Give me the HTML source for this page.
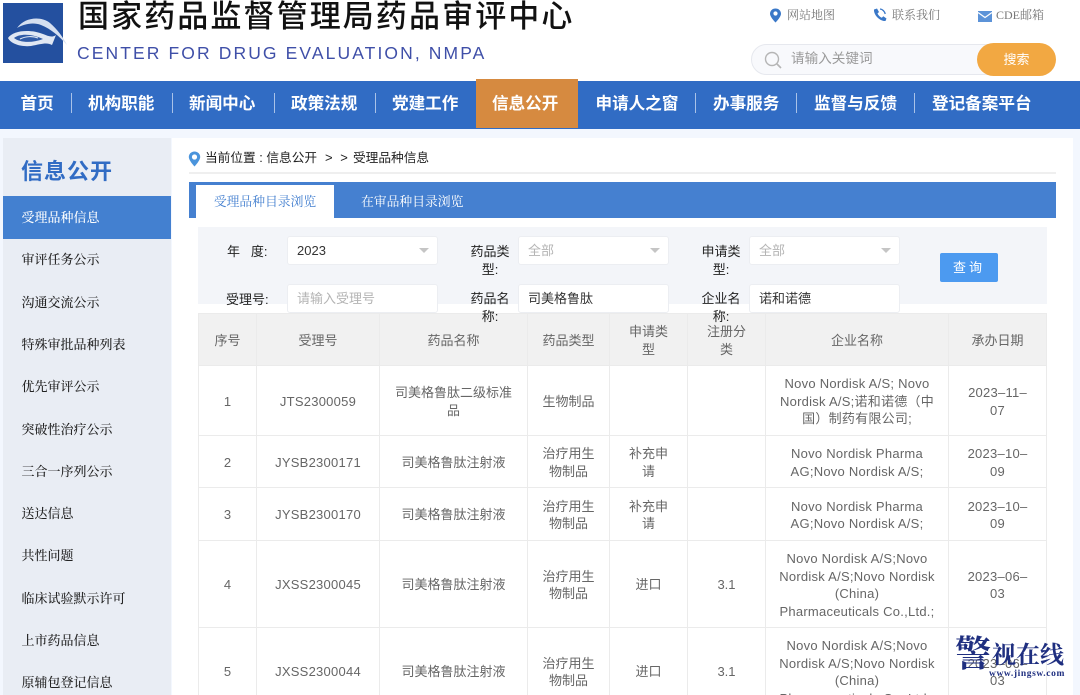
<!DOCTYPE html>
<html lang="zh-CN">
<head>
<meta charset="utf-8">
<title>受理品种信息</title>
<style>
*{box-sizing:border-box;margin:0;padding:0}
html,body{width:1080px;height:695px;overflow:hidden;background:#f3f7fe}
body{position:relative;font-family:"Liberation Sans","Noto Sans CJK SC",sans-serif;color:#333}
.a{position:absolute;white-space:nowrap}
.serif{font-family:"Liberation Serif","Noto Serif CJK SC",serif}
.nav{position:absolute;left:0;top:81px;width:1080px;height:48px;background:#316cc4}
.nav span{position:absolute;top:0;line-height:46px;color:#fff;font-size:16.6px;font-weight:700;white-space:nowrap}
.nav i{position:absolute;top:12px;width:1px;height:20px;background:#a9c2e8}
.side{position:absolute;left:3px;top:138px;width:168px;height:557px;background:#e9edf4}
.side div{position:absolute;left:18.5px;font-size:13px;line-height:20px;color:#222;white-space:nowrap;font-family:"Liberation Serif","Noto Serif CJK SC",serif;font-weight:500}
.box{position:absolute;background:#fff;border:1px solid #eceef2;border-radius:3px;height:29px;width:151px;font-size:13px;line-height:28px;padding-left:9px;color:#333}
.ph{color:#b4b4b4}
.lab{position:absolute;font-size:13px;line-height:17.5px;color:#222;text-align:center;width:40px}
.tri{position:absolute;width:0;height:0;border-left:5px solid transparent;border-right:5px solid transparent;border-top:5px solid #c5c5c5}
table{position:absolute;left:198px;top:313px;width:848px;border-collapse:collapse;table-layout:fixed;font-size:13px;line-height:17.5px;color:#666;text-align:center}
td,th{border:1px solid #ebebeb;font-weight:400;padding:2px 13px 0;vertical-align:middle;word-break:break-all}
th{background:#f1f1f1;height:52px}
.l{letter-spacing:.25px;padding-left:0;padding-right:0;word-break:normal}
</style>
</head>
<body>
<div class="a" style="left:0;top:0;width:1080px;height:81px;background:#fff"></div>
<svg class="a" style="left:3px;top:3px" width="66" height="62" viewBox="0 0 66 62">
<rect width="60" height="60" fill="#24509f"/>
<path d="M14 25C22 14 38 13 47 20C54 26 60 34 64 42C56 33 48 26 38 22C30 19 21 21 14 25Z" fill="#d5dff0"/>
<path d="M5 35C10 27 28 26 40 31C45 33 49 35 53 32L49 42C44 39 38 41 28 43C18 44 8 41 5 35Z" fill="#e0e7f3"/>
<path d="M11 35C17 30 30 31 40 36C30 40 17 40 11 35Z" fill="#2f5aa6"/>
<path d="M17 36C23 33 30 33 35 35" fill="none" stroke="#dfe7f3" stroke-width="1.1"/>
</svg>
<div class="a" style="left:78px;top:-4px;font-size:31px;line-height:42px;letter-spacing:2.1px;color:#111;font-weight:500">国家药品监督管理局药品审评中心</div>
<div class="a" style="left:77px;top:43px;font-size:17.5px;line-height:21px;letter-spacing:2.1px;color:#3f4fa8">CENTER FOR DRUG EVALUATION, NMPA</div>

<svg class="a" style="left:769px;top:8px" width="13" height="15" viewBox="0 0 13 15"><path d="M6.5 .5C3.2 .5 1 3 1 5.7C1 9 6.5 14.500 6.500 14.500S12 9 12 5.700C12 3 9.800 .5 6.500 .5Z" fill="#3a78c8"/><circle cx="6.500" cy="5.500" r="2.100" fill="#fff"/></svg>
<div class="a serif" style="left:787px;top:6px;font-size:12px;line-height:18px;color:#777">网站地图</div>
<svg class="a" style="left:872px;top:7px" width="16" height="16" viewBox="0 0 16 16"><path d="M2 2.500L5 1.500L7 5L5.500 6.500C6.500 8.500 7.800 9.800 9.800 10.800L11.300 9.300L14.500 11.500L13.500 14C8 14.500 1.500 8 2 2.500Z" fill="#3a78c8"/><path d="M8 2C10.500 2.200 12.800 4.500 13.200 7" fill="none" stroke="#3a78c8" stroke-width="1.300"/></svg>
<div class="a serif" style="left:892px;top:6px;font-size:12px;line-height:18px;color:#777">联系我们</div>
<svg class="a" style="left:978px;top:11px" width="14" height="11" viewBox="0 0 14 11"><rect width="14" height="11" fill="#5c93d8"/><path d="M0 1.500L7 6.500L14 1.500" fill="none" stroke="#fff" stroke-width="1.200"/></svg>
<div class="a serif" style="left:996px;top:6px;font-size:12px;line-height:18px;color:#777">CDE邮箱</div>

<div class="a" style="left:751px;top:44px;width:300px;height:31px;background:#f8f9fc;border:1px solid #e6e8ee;border-radius:16px"></div>
<svg class="a" style="left:763px;top:50px" width="20" height="20" viewBox="0 0 20 20"><circle cx="9" cy="9" r="6.500" fill="none" stroke="#b5b5b5" stroke-width="1.400"/><path d="M14 14L18 18" stroke="#b5b5b5" stroke-width="1.600"/></svg>
<div class="a" style="left:791px;top:49px;font-size:13.600px;line-height:20px;color:#9a9a9a">请输入关键词</div>
<div class="a" style="left:977px;top:43px;width:79px;height:33px;background:#f2a842;border-radius:17px;color:#fff;font-size:13px;line-height:33px;text-align:center">搜索</div>

<div class="nav">
<span style="left:20.500px">首页</span><i style="left:71px"></i>
<span style="left:88px">机构职能</span><i style="left:172px"></i>
<span style="left:189px">新闻中心</span><i style="left:274px"></i>
<span style="left:291px">政策法规</span><i style="left:375px"></i>
<span style="left:392px">党建工作</span>
<div style="position:absolute;left:476px;top:-2px;width:102px;height:49px;background:#d68a40"></div>
<span style="left:492px">信息公开</span>
<span style="left:595.500px">申请人之窗</span><i style="left:695px"></i>
<span style="left:713px">办事服务</span><i style="left:796px"></i>
<span style="left:814px">监督与反馈</span><i style="left:914px"></i>
<span style="left:932px">登记备案平台</span>
</div>

<div class="a" style="left:172px;top:138px;width:901px;height:557px;background:#fff"></div>

<div class="side">
<div style="left:18px;top:19px;font-family:'Liberation Sans','Noto Sans CJK SC',sans-serif;font-size:22px;line-height:30px;font-weight:700;color:#316cc4;letter-spacing:1px">信息公开</div>
<div style="left:0;top:58px;width:168px;height:43px;background:#4380d0"></div>
<div style="top:70px;color:#fff">受理品种信息</div>
<div style="top:112px">审评任务公示</div>
<div style="top:155px">沟通交流公示</div>
<div style="top:197px">特殊审批品种列表</div>
<div style="top:239px">优先审评公示</div>
<div style="top:282px">突破性治疗公示</div>
<div style="top:324px">三合一序列公示</div>
<div style="top:366px">送达信息</div>
<div style="top:408px">共性问题</div>
<div style="top:451px">临床试验默示许可</div>
<div style="top:493px">上市药品信息</div>
<div style="top:535px">原辅包登记信息</div>
</div>

<svg class="a" style="left:188px;top:151px" width="13" height="16" viewBox="0 0 13 16"><path d="M6.500 .5C3.200 .5 .8 3 .8 6C.8 9.500 6.500 15.500 6.500 15.500S12.200 9.500 12.200 6C12.200 3 9.800 .5 6.500 .5Z" fill="#4a94dc"/><circle cx="6.500" cy="6" r="2.600" fill="#fff"/></svg>
<div class="a" style="left:205px;top:148px;font-size:12.700px;line-height:20px;color:#222">当前位置 : 信息公开</div>
<div class="a" style="left:325px;top:148px;font-size:13px;line-height:20px;color:#222;letter-spacing:2px">&gt; &gt;</div>
<div class="a" style="left:353px;top:148px;font-size:12.700px;line-height:20px;color:#222">受理品种信息</div>
<div class="a" style="left:189px;top:172px;width:867px;height:2px;background:#efefef"></div>

<div class="a" style="left:189px;top:182px;width:867px;height:36px;background:#4580d0"></div>
<div class="a serif" style="left:196px;top:185px;width:138px;height:33px;background:#fff;color:#4580d0;font-size:12.800px;line-height:35px;text-align:center">受理品种目录浏览</div>
<div class="a serif" style="left:361px;top:185px;color:#fff;font-size:12.800px;line-height:35px">在审品种目录浏览</div>

<div class="a" style="left:198px;top:227px;width:849px;height:77px;background:#f3f5f9"></div>

<table>
<colgroup><col style="width:58px"><col style="width:123px"><col style="width:148px"><col style="width:82px"><col style="width:78px"><col style="width:78px"><col style="width:183px"><col style="width:98px"></colgroup>
<tr><th>序号</th><th>受理号</th><th>药品名称</th><th>药品类型</th><th>申请类型</th><th>注册分类</th><th>企业名称</th><th>承办日期</th></tr>
<tr style="height:70px"><td>1</td><td class="l">JTS2300059</td><td>司美格鲁肽二级标准品</td><td>生物制品</td><td></td><td></td><td class="l">Novo Nordisk A/S; Novo<br>Nordisk A/S;诺和诺德（中<br>国）制药有限公司;</td><td class="l">2023–11–<br>07</td></tr>
<tr style="height:52px"><td>2</td><td class="l">JYSB2300171</td><td>司美格鲁肽注射液</td><td>治疗用生物制品</td><td>补充申请</td><td></td><td class="l">Novo Nordisk Pharma<br>AG;Novo Nordisk A/S;</td><td class="l">2023–10–<br>09</td></tr>
<tr style="height:53px"><td>3</td><td class="l">JYSB2300170</td><td>司美格鲁肽注射液</td><td>治疗用生物制品</td><td>补充申请</td><td></td><td class="l">Novo Nordisk Pharma<br>AG;Novo Nordisk A/S;</td><td class="l">2023–10–<br>09</td></tr>
<tr style="height:87px"><td>4</td><td class="l">JXSS2300045</td><td>司美格鲁肽注射液</td><td>治疗用生物制品</td><td>进口</td><td>3.1</td><td class="l">Novo Nordisk A/S;Novo<br>Nordisk A/S;Novo Nordisk<br>(China)<br>Pharmaceuticals Co.,Ltd.;</td><td class="l">2023–06–<br>03</td></tr>
<tr style="height:87px"><td>5</td><td class="l">JXSS2300044</td><td>司美格鲁肽注射液</td><td>治疗用生物制品</td><td>进口</td><td>3.1</td><td class="l">Novo Nordisk A/S;Novo<br>Nordisk A/S;Novo Nordisk<br>(China)<br>Pharmaceuticals Co.,Ltd.;</td><td class="l">2023–06–<br>03</td></tr>
</table>

<div class="a" style="left:227px;top:243px;font-size:13px;line-height:17.500px;color:#222">年 &nbsp; 度:</div>
<div class="box" style="left:287px;top:236px">2023</div><div class="tri" style="left:419px;top:248px"></div>
<div class="lab" style="left:470px;top:243px">药品类型:</div>
<div class="box ph" style="left:518px;top:236px">全部</div><div class="tri" style="left:650px;top:248px"></div>
<div class="lab" style="left:701px;top:243px">申请类型:</div>
<div class="box ph" style="left:749px;top:236px">全部</div><div class="tri" style="left:881px;top:248px"></div>
<div class="a" style="left:940px;top:253px;width:58px;height:29px;background:#4c9af0;border-radius:2px;color:#fff;font-size:13px;line-height:29px;text-align:center;letter-spacing:3px">查询</div>

<div class="a" style="left:226px;top:291px;font-size:13px;line-height:17.500px;color:#222">受理号:</div>
<div class="box ph" style="left:287px;top:284px">请输入受理号</div>
<div class="lab" style="left:470px;top:290px">药品名称:</div>
<div class="box" style="left:518px;top:284px">司美格鲁肽</div>
<div class="lab" style="left:701px;top:290px">企业名称:</div>
<div class="box" style="left:749px;top:284px">诺和诺德</div>

<div class="a serif" style="left:955px;top:634px;font-size:36px;line-height:40px;font-weight:700;color:#1f2f80">警</div>
<div class="a serif" style="left:992px;top:642px;font-size:24px;line-height:28px;font-weight:700;color:#1f2f80">视在线</div>
<div class="a serif" style="left:989px;top:668px;font-size:9.500px;line-height:12px;font-weight:700;letter-spacing:.6px;color:#1f2f80">www.jingsw.com</div>
</body>
</html>
